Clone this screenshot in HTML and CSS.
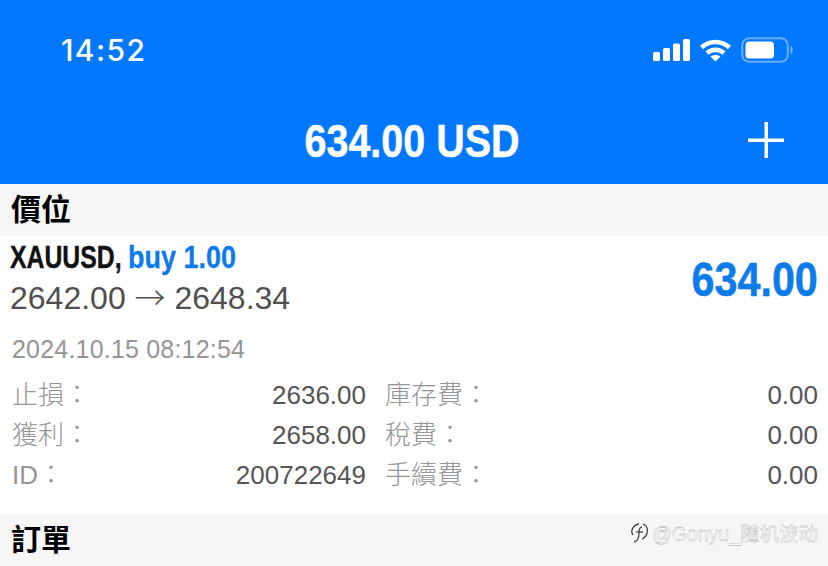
FILE: index.html
```html
<!DOCTYPE html>
<html lang="zh-Hant">
<head>
    <meta charset="UTF-8">
    <meta name="viewport" content="width=device-width, initial-scale=1.0">
    <title>交易</title>
    <link rel="stylesheet" href="styles.css">
</head>
<body>

<header class="top">
    <div class="status">
        <span class="time">14:52</span>
        <div class="status-icons">
            <svg width="37" height="24" viewBox="0 0 37 24" fill="#fff">
                <rect x="0" y="14" width="7" height="9" rx="1.5"/>
                <rect x="10" y="10" width="7" height="13" rx="1.5"/>
                <rect x="20" y="5.500" width="7" height="17.500" rx="1.500"/>
                <rect x="30" y="1" width="7" height="22" rx="1.500"/>
            </svg>
            <svg width="33" height="24" viewBox="0 0 33 24" fill="none" stroke="#fff" stroke-width="4.500">
                <path d="M2.500 9.500C10.500 2 22.500 2 30.500 9.500"/>
                <path d="M8 15C13 10.500 20 10.500 25 15"/>
                <path d="M16.500 23.500L11.500 18.500C14.500 16.500 18.500 16.500 21.500 18.500Z" fill="#fff" stroke="none"/>
            </svg>
            <svg width="54" height="26" viewBox="0 0 54 26">
                <rect x="1.200" y="1.200" width="45.600" height="23.600" rx="7" fill="none" stroke="#fff" stroke-opacity=".4" stroke-width="2"/>
                <rect x="4.500" y="4.500" width="28.500" height="17" rx="3.500" fill="#fff"/>
                <path d="M49.500 9C52.500 10 52.500 16 49.500 17Z" fill="#fff" fill-opacity=".45"/>
            </svg>
        </div>
    </div>
    <div class="title-bar">
        <h1 class="title">634.00 USD</h1>
        <svg class="plus" width="36" height="36" viewBox="0 0 36 36" fill="#fff">
            <rect x="16.500" y="0" width="3.500" height="36"/>
            <rect x="0" y="16.500" width="36" height="3.500"/>
        </svg>
    </div>
</header>

<main>
    <h2 class="band">價位</h2>

    <section class="position">
        <div class="pos-head">
            <div>
                <div class="pos-name"><span class="symbol">XAUUSD,</span><span class="blue">buy 1.00</span></div>
                <div class="pos-price">2642.00 <span class="arrow">→</span> 2648.34</div>
            </div>
            <div class="pos-profit">634.00</div>
        </div>
        <div class="pos-date">2024.10.15 08:12:54</div>
        <div class="details">
            <span class="label">止損：</span><span class="value">2636.00</span>
            <span class="label">庫存費：</span><span class="value">0.00</span>
            <span class="label">獲利：</span><span class="value">2658.00</span>
            <span class="label">稅費：</span><span class="value">0.00</span>
            <span class="label">ID：</span><span class="value">200722649</span>
            <span class="label">手續費：</span><span class="value">0.00</span>
        </div>
    </section>

    <h2 class="band">訂單</h2>
</main>

<div class="watermark">
    <svg width="20" height="22" viewBox="0 0 20 22" fill="none" stroke="#444" stroke-width="1.300">
        <path d="M3 13C0 9 3 3 9 2"/>
        <path d="M13 2C19 4 19 14 12 17"/>
        <path d="M12 5C9 5 9 8 9 11C9 15 8 19 4 20"/>
        <path d="M6 10H13"/>
    </svg>
    <span>@Gonyu_随机波动</span>
</div>

</body>
</html>
```

FILE: styles.css
```css
* {
    box-sizing: border-box;
}
body {
    margin: 0;
    height: 566px;
    overflow: hidden;
    position: relative;
    font-family: "Liberation Sans", "Noto Sans CJK TC", sans-serif;
    background-color: white;
}
.top {
    background-color: #0278fe;
    color: white;
    height: 184px;
}
.status {
    display: flex;
    justify-content: space-between;
    align-items: center;
    height: 100px;
    padding: 0 33px 0 61px;
}
.time {
    font-family: Inter, "Liberation Sans", sans-serif;
    font-size: 30px;
    font-weight: 500;
    letter-spacing: 1.4px;
    margin-top: -1px;
}
.status-icons {
    display: flex;
    align-items: center;
    gap: 9px;
}
.title-bar {
    display: flex;
    justify-content: center;
    align-items: center;
    position: relative;
    height: 84px;
}
.title {
    margin: -3px 0 0 -4px;
    font-size: 47px;
    font-weight: bold;
    -webkit-text-stroke: .5px white;
    transform: scaleX(.84);
}
.plus {
    position: absolute;
    right: 44px;
    top: 22px;
}
.band {
    margin: 0;
    height: 52px;
    padding: 0 11px;
    background-color: #f6f6f6;
    color: black;
    font-size: 30px;
    line-height: 52px;
    font-weight: bold;
}
.position {
    height: 278px;
    padding: 0 10px 0 12px;
}
.pos-head {
    display: flex;
    justify-content: space-between;
    align-items: center;
    height: 86px;
}
.pos-name {
    display: flex;
    margin-left: -2px;
    font-size: 31px;
    line-height: 36px;
    font-weight: bold;
    white-space: nowrap;
}
.symbol {
    width: 118px;
    color: #111;
    -webkit-text-stroke: .4px #111;
    transform: scaleX(.8);
    transform-origin: left;
}
.blue {
    color: #0d7bea;
    -webkit-text-stroke: .3px #0d7bea;
    transform: scaleX(.87);
    transform-origin: left;
}
.pos-price {
    margin-left: -2px;
    margin-top: 2px;
    font-size: 32px;
    line-height: 40px;
    color: #4f4f4f;
}
.arrow {
    font-family: "Noto Sans CJK TC", sans-serif;
    font-weight: 300;
    font-size: 31px;
    line-height: 30px;
}
.pos-profit {
    font-size: 48px;
    font-weight: bold;
    color: #0d7bea;
    -webkit-text-stroke: .5px #0d7bea;
    transform: scaleX(.86);
    transform-origin: right;
}
.pos-date {
    margin-top: 13px;
    font-size: 25px;
    letter-spacing: .2px;
    color: #959595;
}
.details {
    display: grid;
    grid-template-columns: 120px 234px 120px 332px;
    margin-top: 11px;
    font-size: 26px;
    line-height: 40px;
    white-space: nowrap;
}
.label {
    color: #959595;
    font-weight: 300;
}
.label:nth-child(4n+3) {
    padding-left: 19px;
}
.value {
    text-align: right;
    color: #555;
}
.watermark {
    position: absolute;
    right: 10px;
    top: 518px;
    display: flex;
    align-items: center;
    gap: 2px;
    font-size: 19.5px;
    color: rgba(255, 255, 255, .9);
    -webkit-text-stroke: .3px #999;
}
```
